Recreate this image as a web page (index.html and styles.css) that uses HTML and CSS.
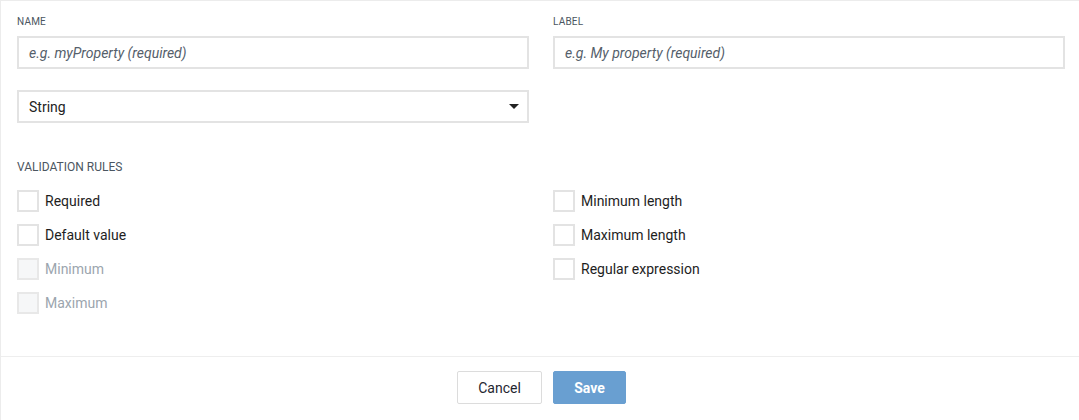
FILE: index.html
```html
<!DOCTYPE html>
<html>
<head>
<meta charset="utf-8">
<link rel="stylesheet" href="styles.css">
</head>
<body>
<div class="panel">
  <div class="form">
    <div class="grid">
      <div class="field">
        <div class="label">Name</div>
        <div class="input placeholder">e.g. myProperty (required)</div>
      </div>
      <div class="field">
        <div class="label">Label</div>
        <div class="input placeholder">e.g. My property (required)</div>
      </div>
      <div class="field">
        <div class="input select">
          <span>String</span>
          <svg class="caret" width="10" height="5" viewBox="0 0 10 5"><path d="M0 0H10L5 5Z" fill="#222"/></svg>
        </div>
      </div>
    </div>
    <div class="section">Validation rules</div>
    <div class="grid rules">
      <div class="col">
        <div class="check"><span class="box"></span><span>Required</span></div>
        <div class="check"><span class="box"></span><span>Default value</span></div>
        <div class="check disabled"><span class="box"></span><span>Minimum</span></div>
        <div class="check disabled"><span class="box"></span><span>Maximum</span></div>
      </div>
      <div class="col">
        <div class="check"><span class="box"></span><span>Minimum length</span></div>
        <div class="check"><span class="box"></span><span>Maximum length</span></div>
        <div class="check"><span class="box"></span><span>Regular expression</span></div>
      </div>
    </div>
  </div>
  <div class="footer">
    <button class="btn cancel">Cancel</button>
    <button class="btn save">Save</button>
  </div>
</div>
</body>
</html>
```
FILE: styles.css
```css
html, body {
  margin: 0;
  padding: 0;
  background: #fff;
  font-family: Roboto, "Liberation Sans", sans-serif;
}
.panel {
  height: 420px;
  box-sizing: border-box;
  border-top: 1px solid #ececec;
  border-left: 1px solid #ececec;
  display: flex;
  flex-direction: column;
}
.form {
  padding: 15px 14px 0 16px;
  height: 340px;
  box-sizing: border-box;
}
.grid {
  display: grid;
  grid-template-columns: 512px 512px;
  column-gap: 24px;
  row-gap: 21px;
}
.label {
  font-size: 10px;
  line-height: 12px;
  color: #4b5661;
  text-transform: uppercase;
  letter-spacing: 0.2px;
  margin-bottom: 8px;
}
.input {
  height: 33px;
  box-sizing: border-box;
  border: 2px solid #e3e3e3;
  padding: 0 10px;
  display: flex;
  align-items: center;
  font-size: 14px;
  color: #222;
}
.placeholder {
  font-style: italic;
  color: #55606b;
}
.select {
  justify-content: space-between;
  padding-right: 8px;
}
.caret {
  display: block;
}
.section {
  margin-top: 37px;
  font-size: 12px;
  line-height: 14px;
  color: #4b5661;
  text-transform: uppercase;
}
.rules {
  margin-top: 16px;
}
.col {
  display: flex;
  flex-direction: column;
  gap: 12px;
}
.check {
  display: flex;
  align-items: center;
  gap: 6px;
  height: 22px;
  font-size: 14px;
  color: #1e1e1e;
}
.box {
  width: 22px;
  height: 22px;
  box-sizing: border-box;
  border: 2px solid #e3e3e3;
  background: #fff;
}
.disabled {
  color: #9ba5ae;
}
.disabled .box {
  background: #f6f7f8;
  border-color: #e8e8e8;
}
.footer {
  margin-top: 15px;
  border-top: 1px solid #eeeeee;
  padding-top: 14px;
  display: flex;
  justify-content: center;
  gap: 11px;
  padding-left: 3px;
}
.btn {
  height: 33px;
  box-sizing: border-box;
  font-family: Roboto, "Liberation Sans", sans-serif;
  font-size: 14px;
  border-radius: 2px;
}
.cancel {
  width: 85px;
  background: #fff;
  border: 1px solid #dcdcdc;
  color: #1f2630;
}
.save {
  width: 73px;
  background: #699fd1;
  border: 1px solid #699fd1;
  color: #fff;
  font-weight: bold;
}
```
